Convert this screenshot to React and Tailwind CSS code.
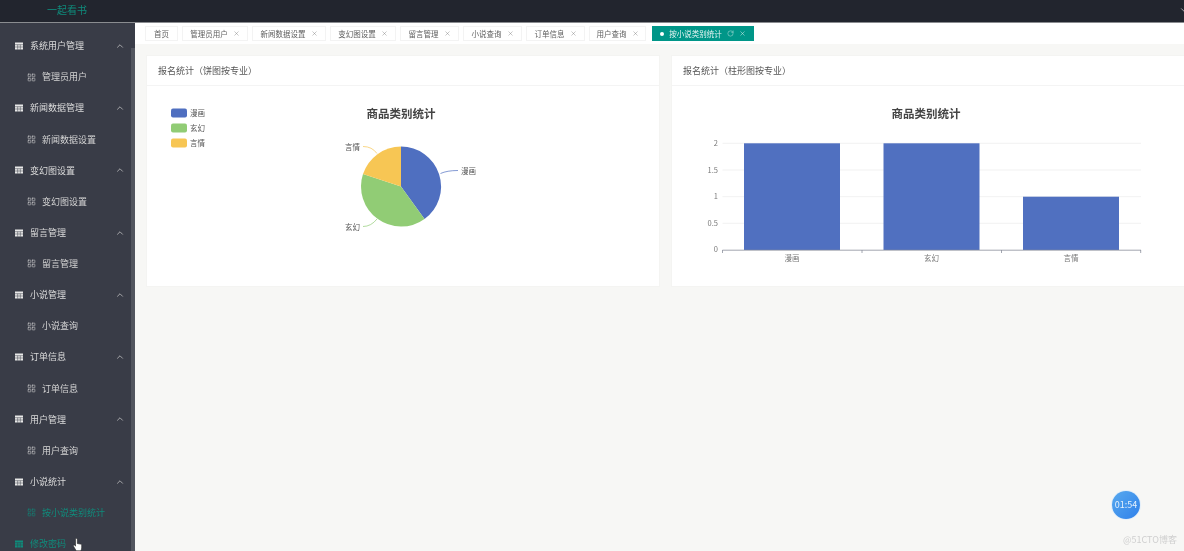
import React from "react";
import { ChevronUp, ChevronDown, X, RotateCw, LayoutGrid } from "lucide-react";

const menu = [
  ["系统用户管理", "管理员用户"],
  ["新闻数据管理", "新闻数据设置"],
  ["变幻图设置", "变幻图设置"],
  ["留言管理", "留言管理"],
  ["小说管理", "小说查询"],
  ["订单信息", "订单信息"],
  ["用户管理", "用户查询"],
  ["小说统计", "按小说类别统计"],
];
const tabs = [
  ["首页", "w-[33px]"],
  ["管理员用户", "w-[66px]"],
  ["新闻数据设置", "w-[74px]"],
  ["变幻图设置", "w-[66px]"],
  ["留言管理", "w-[59px]"],
  ["小说查询", "w-[59px]"],
  ["订单信息", "w-[59px]"],
  ["用户查询", "w-[57px]"],
];
const font = '"Noto Sans CJK SC", "Liberation Sans", sans-serif';

function TableIcon({ className }) {
  return (
    <svg width="8" height="8" viewBox="0 0 8 8" className={className} fill="currentColor">
      <path d="M0 0.5h8v7H0z" />
      <path d="M0 2.7h8M0 5h8M2.7 2.7v5M5.3 2.7v5" stroke="#393c47" strokeWidth="0.5" fill="none" />
    </svg>
  );
}

function Row({ children, className = "" }) {
  return <div className={`h-[31.125px] flex items-center shrink-0 text-[9px] ${className}`}>{children}</div>;
}

function Sidebar() {
  return (
    <aside className="w-[135px] shrink-0 bg-[#393c47] pt-[7.4px] overflow-hidden relative">
      <div className="absolute right-0 top-[25px] bottom-0 w-[4px] bg-[#52555e]" />
      {menu.map(([p, c], i) => (
        <div key={p + i}>
          <Row className="pl-[15px] pr-[10px] text-[#dcdcdc]">
            <TableIcon className="mr-[7px] text-[#e8e8e8]" />
            <span className="flex-1">{p}</span>
            <ChevronUp size={10} strokeWidth={1.8} className="text-[#c8c8c8]" />
          </Row>
          <Row className={`pl-[27px] ${i === 7 ? "text-[#0f8c7c]" : "text-[#d4d4d4]"}`}>
            <LayoutGrid size={9} strokeWidth={1.5} className="mr-[6px]" />
            <span>{c}</span>
          </Row>
        </div>
      ))}
      <Row className="pl-[15px] text-[#0f8c7c]">
        <TableIcon className="mr-[7px]" />
        <span>修改密码</span>
      </Row>
    </aside>
  );
}

function TabBar() {
  return (
    <div className="h-[21px] bg-white flex items-center pl-[10px] gap-[4px] shrink-0">
      {tabs.map(([t, w], i) => (
        <div
          key={t}
          className={`${w} h-[15px] bg-white border border-[#f3f3f3] flex items-center justify-center gap-[5px] text-[7.5px] text-[#5f5f5f]`}
        >
          <span>{t}</span>
          {i > 0 && <X size={7} strokeWidth={1.4} className="text-[#777]" />}
        </div>
      ))}
      <div className="w-[102px] h-[15px] ml-[2px] bg-[#009688] flex items-center justify-center gap-[5px] text-[7.5px] text-[#e8f6f4]">
        <span className="w-[4px] h-[4px] rounded-full bg-white" />
        <span>按小说类别统计</span>
        <RotateCw size={7} strokeWidth={1.4} />
        <X size={7} strokeWidth={1.6} />
      </div>
    </div>
  );
}

function Card({ title, children }) {
  return (
    <section className="w-[514px] h-[232px] shrink-0 bg-white border border-[#f4f4f2]">
      <div className="h-[30px] border-b border-[#f4f4f4] pl-[11px] flex items-center text-[9px] text-[#555]">
        {title}
      </div>
      {children}
    </section>
  );
}

function Pie() {
  return (
    <svg width="512" height="200" viewBox="147 86 512 200" style={{ fontFamily: font }}>
      {[["#4f6fc0", 113, "漫画"], ["#91cc75", 128, "玄幻"], ["#f7c654", 143, "言情"]].map(([c, y, t]) => (
        <g key={t}>
          <rect x="171" y={y - 4.5} width="16" height="9" rx="2" fill={c} />
          <text x="190" y={y + 3} fontSize="7.5" fill="#555">{t}</text>
        </g>
      ))}
      <text x="401" y="117.8" textAnchor="middle" fontSize="11.5" fontWeight="700" fill="#444">商品类别统计</text>
      <path d="M401 186.5L401 146.5A40 40 0 0 1 424.5 218.9Z" fill="#4f6fc0" />
      <path d="M401 186.5L424.5 218.9A40 40 0 0 1 363 174.1Z" fill="#91cc75" />
      <path d="M401 186.5L363 174.1A40 40 0 0 1 401 146.5Z" fill="#f7c654" />
      <path d="M440.5 173.5Q447 170.5 458 170.5" stroke="#4f6fc0" strokeWidth="0.7" fill="none" />
      <path d="M377 219Q371 226.5 363 226.5" stroke="#91cc75" strokeWidth="0.7" fill="none" />
      <path d="M377 153.5Q372 146.5 363 146.5" stroke="#f7c654" strokeWidth="0.7" fill="none" />
      <text x="461" y="174" fontSize="7.5" fill="#555">漫画</text>
      <text x="345" y="230" fontSize="7.5" fill="#555">玄幻</text>
      <text x="345" y="149.5" fontSize="7.5" fill="#555">言情</text>
    </svg>
  );
}

function Bars() {
  const ticks = [[143.3, "2"], [170, "1.5"], [196.7, "1"], [223.3, "0.5"]];
  return (
    <svg width="512" height="200" viewBox="672 86 512 200" style={{ fontFamily: font }}>
      <text x="926" y="117.8" textAnchor="middle" fontSize="11.5" fontWeight="700" fill="#444">商品类别统计</text>
      {ticks.map(([y, t]) => (
        <g key={t}>
          <path d={`M722.5 ${y}H1141`} stroke="#eeeeee" strokeWidth="0.8" />
          <text x="718" y={y + 2.5} textAnchor="end" fontSize="7.5" fill="#777">{t}</text>
        </g>
      ))}
      <text x="718" y="252" textAnchor="end" fontSize="7.5" fill="#777">0</text>
      <rect x="744" y="143.3" width="96" height="106.7" fill="#5070c0" />
      <rect x="883.5" y="143.3" width="96" height="106.7" fill="#5070c0" />
      <rect x="1023" y="196.7" width="96" height="53.3" fill="#5070c0" />
      <path d="M722.5 250.2H1141M722.5 250V253M862 250V253M1001.5 250V253M1140.7 250V253" stroke="#8a8f9c" strokeWidth="0.8" fill="none" />
      <text x="792" y="261" textAnchor="middle" fontSize="7.5" fill="#777">漫画</text>
      <text x="931.5" y="261" textAnchor="middle" fontSize="7.5" fill="#777">玄幻</text>
      <text x="1071" y="261" textAnchor="middle" fontSize="7.5" fill="#777">言情</text>
    </svg>
  );
}

export default function App() {
  return (
    <div className="relative w-[1184px] h-[551px] overflow-hidden flex flex-col bg-[#f7f7f5] blur-[0.35px]" style={{ fontFamily: font }}>
      <header className="h-[23px] shrink-0 bg-[#22252e] border-b border-[#8a8c90] flex items-center pl-[47px] pb-[3px] text-[10px] text-[#0f8c7c] relative overflow-hidden">
        <span className="flex-1">一起看书</span>
        <ChevronDown size={10} strokeWidth={1.8} className="text-[#d8d8d8] mr-[-5px]" />
      </header>
      <div className="flex flex-1 min-h-0">
        <Sidebar />
        <main className="flex-1 min-w-0 flex flex-col overflow-hidden">
          <TabBar />
          <div className="flex gap-[11px] pl-[11px] pt-[11px]">
            <Card title="报名统计（饼图按专业）"><Pie /></Card>
            <Card title="报名统计（柱形图按专业）"><Bars /></Card>
          </div>
        </main>
      </div>
      <div className="absolute left-[1112px] top-[491px] w-[28px] h-[28px] rounded-full bg-gradient-to-br from-[#58a9ee] to-[#2f80ea] ring-1 ring-[#e3effa] flex items-center justify-center text-[9px] text-[#e6f1fc]">
        01:54
      </div>
      <div className="absolute left-[1123px] top-[533px] text-[9px] text-[#cfcfcf]">@51CTO博客</div>
      <svg width="10" height="14" viewBox="0 0 10 14" className="absolute left-[73px] top-[538px]">
        <path
          d="M2.5 1.2c0-1.2 1.8-1.2 1.8 0V5.5l3.2.6c.9.2 1.2.8 1.2 1.6V10c0 1-.5 2-1 2.8H3.2L.5 8.2c-.5-1 .7-1.7 1.3-1l.7 1z"
          fill="#fff"
          stroke="#222"
          strokeWidth="0.6"
        />
      </svg>
    </div>
  );
}
